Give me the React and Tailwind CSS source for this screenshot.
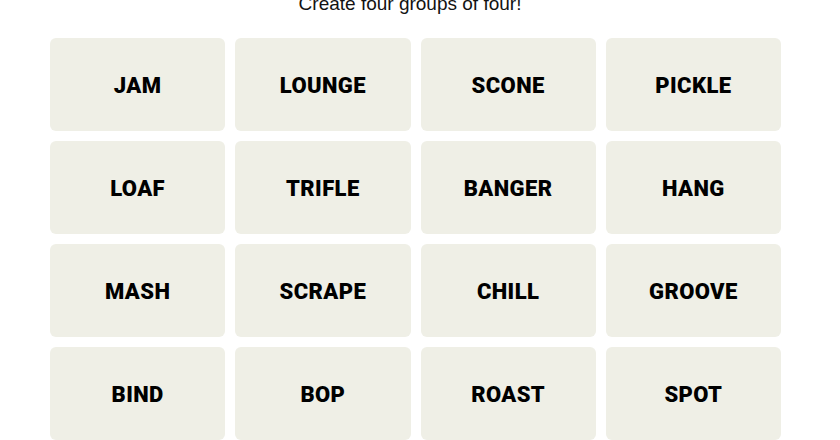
import React from "react";

const words = [
  "JAM", "LOUNGE", "SCONE", "PICKLE",
  "LOAF", "TRIFLE", "BANGER", "HANG",
  "MASH", "SCRAPE", "CHILL", "GROOVE",
  "BIND", "BOP", "ROAST", "SPOT",
];

export default function App() {
  return (
    <div className="w-[840px] h-[440px] overflow-hidden bg-white">
      <div
        className="mt-[-6px] h-[20px] text-center text-[19px] leading-[20px] text-[#121212] pr-[20px]"
        style={{ fontFamily: '"Liberation Sans", Arial, sans-serif' }}
      >
        Create four groups of four!
      </div>
      <div className="ml-[50px] mt-[24px] w-[731px] grid grid-cols-4 gap-[10px]">
        {words.map((w) => (
          <div
            key={w}
            className="h-[93px] rounded-md bg-[#efefe6] flex items-center justify-center pt-[2px] text-[22px] font-black tracking-[0.4px] text-black"
            style={{ fontFamily: 'Roboto, "Liberation Sans", sans-serif' }}
          >
            {w}
          </div>
        ))}
      </div>
    </div>
  );
}
